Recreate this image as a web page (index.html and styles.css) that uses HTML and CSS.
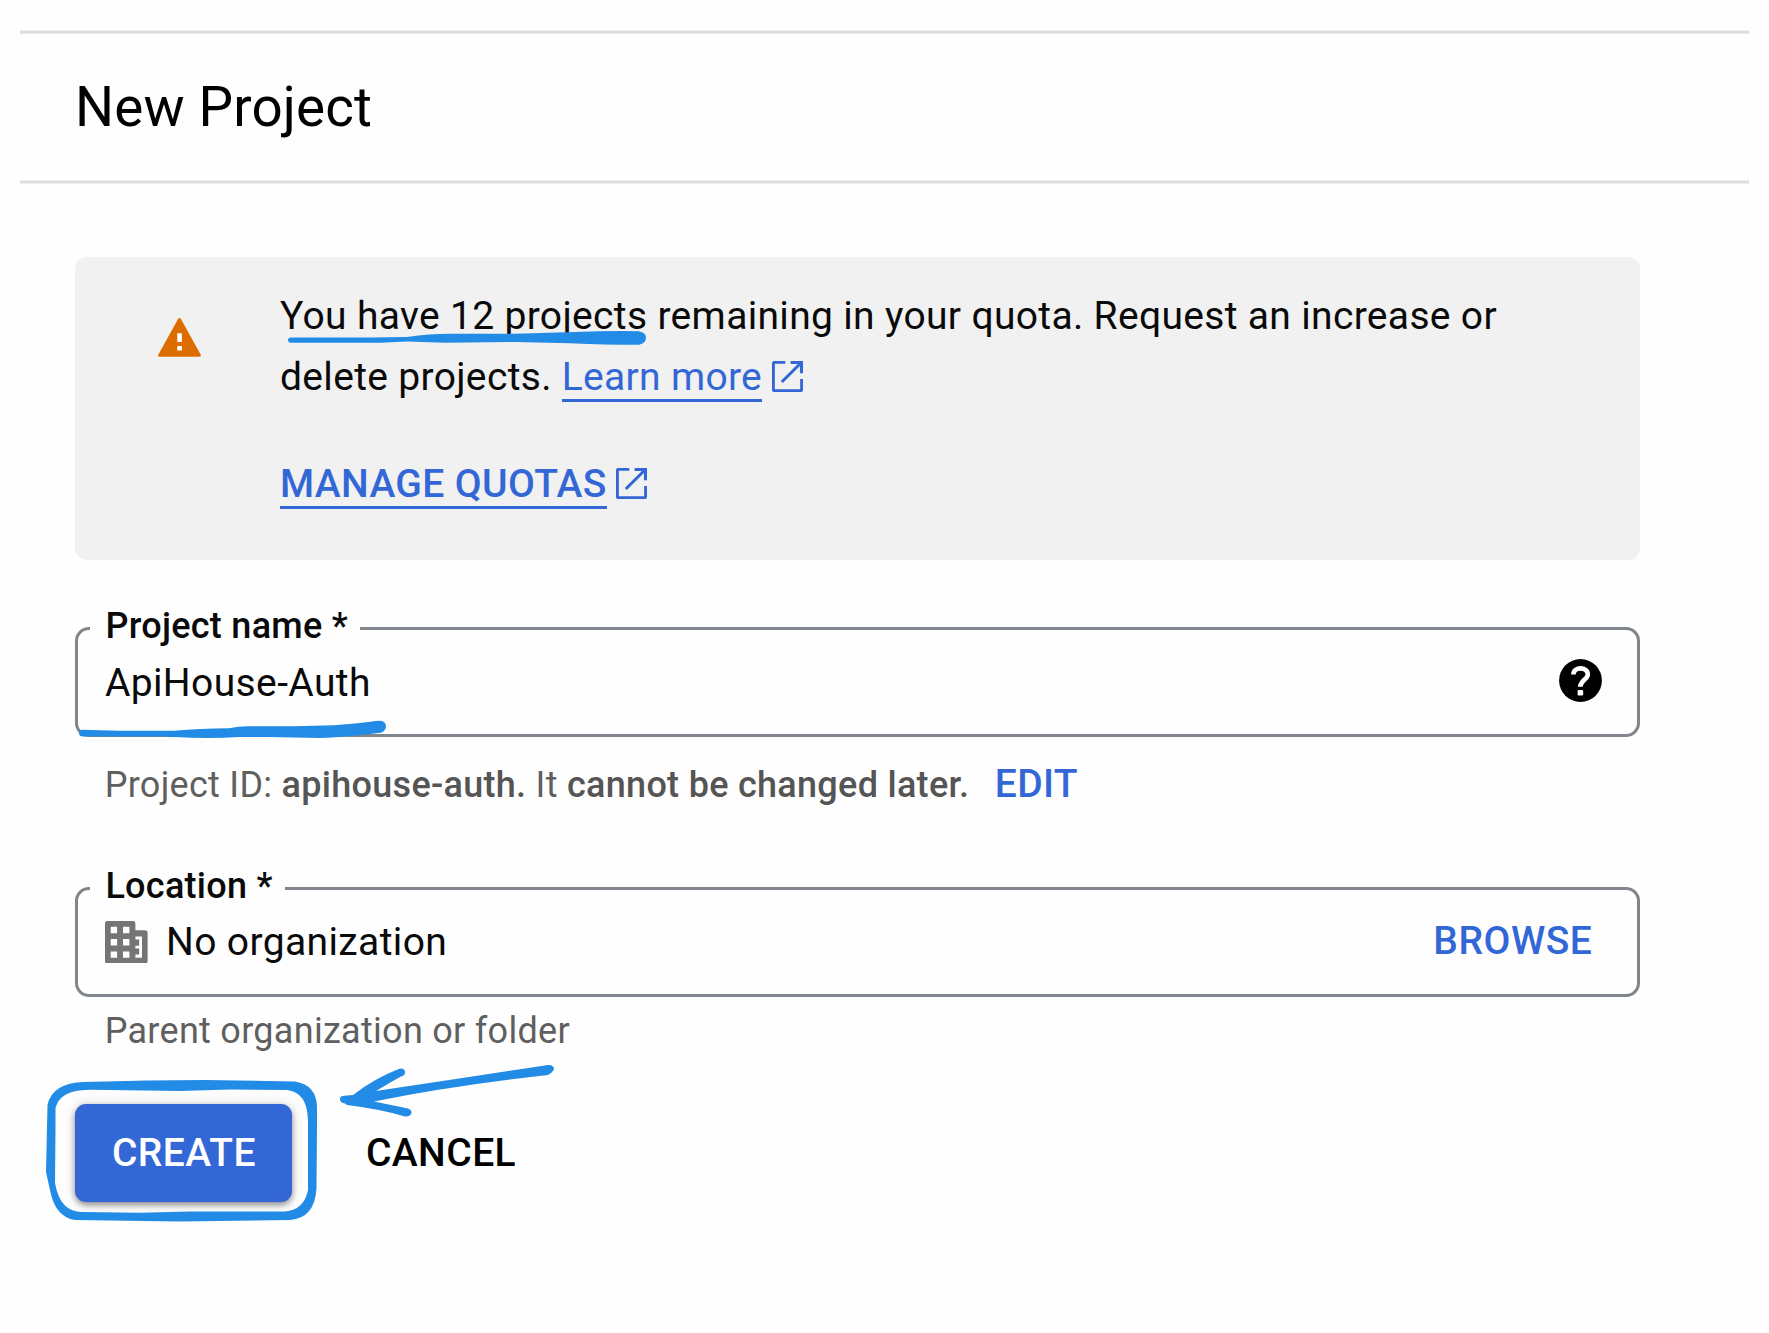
FILE: index.html
```html
<!DOCTYPE html>
<html lang="en">
<head>
<meta charset="utf-8">
<title>New Project</title>
<link rel="stylesheet" href="styles.css">
</head>
<body>
<header class="header"><h1 class="title">New Project</h1></header>
<main class="content">
  <section class="notice">
    <svg class="warn-icon" viewBox="0 0 43 39" width="43" height="39">
      <path fill="#dd6d00" d="M19.9 1.2q1.6-2.2 3.2 0L42.6 36.4q.9 2.3-1.6 2.4H2Q-.5 38.7.4 36.4z"/>
      <path fill="#fff" d="M19.3 15.3h4.6v8.6h-4.6zM19.3 28h4.6v4.6h-4.6z"/>
    </svg>
    <div class="notice-text">
      <p class="notice-line"><span class="marked">You have 12 projects<svg class="mark quota-mark" viewBox="0 0 366 20" width="366" height="20"><path d="M6 4.5H85L122 4Q145 .8 165 .8H230L290-1Q325-2.5 354-1.8Q361-.5 361 4.5Q361 10.5 354 11.7Q325 11.8 285 10.2L230 9L160 9.8L122 8.6L95 9.8H6Q3 9.6 3 7.2T6 4.5z"/></svg></span> remaining in your quota. Request an increase or<br>delete projects. <a class="link learn">Learn more</a><svg class="open-icon" viewBox="0 0 31 31" width="31" height="31"><path d="M13.3 1.3H3Q1.3 1.3 1.3 3V28Q1.3 29.7 3 29.7H28Q29.7 29.7 29.7 28V18M18.6 1.5H29.5V12.2M9.8 21L28.9 2"/></svg></p>
      <p class="notice-action"><a class="link manage">MANAGE QUOTAS</a><svg class="open-icon" viewBox="0 0 31 31" width="31" height="31"><path d="M13.3 1.3H3Q1.3 1.3 1.3 3V28Q1.3 29.7 3 29.7H28Q29.7 29.7 29.7 28V18M18.6 1.5H29.5V12.2M9.8 21L28.9 2"/></svg></p>
    </div>
  </section>

  <div class="field name-field">
    <label class="label">Project name *</label>
    <span class="value">ApiHouse-Auth</span>
    <svg class="help-icon" viewBox="0 0 43 43" width="43" height="43"><circle cx="21.5" cy="21.5" r="21.4"/><path d="M14.4 15.6C14.4 7.2 28.8 7.4 28.8 15.4C28.8 20.5 21.3 21.3 21.3 27.8" fill="none" stroke="#fff" stroke-width="4.6"/><rect x="18.6" y="31" width="5.6" height="5.6" rx="1" fill="#fff"/></svg>
    <svg class="mark name-mark" viewBox="0 0 310 20" width="310" height="20"><path d="M4 9.7L40 10.7H95Q120 8.5 150 8.3Q160 6 172 6.3H215L255 5.2Q280 3.5 299 .7Q307 .3 307 6.5Q306.5 11 302 12.7Q265 17.3 240 18L190 17H160Q130 19 95 17L85 16.5H4Q0 16.5 0 13T4 9.7z"/></svg>
  </div>
  <p class="hint">Project ID: <b>apihouse-auth.</b> It <b>cannot be changed later.</b><a class="text-button edit">EDIT</a></p>

  <div class="field location-field">
    <label class="label">Location *</label>
    <svg class="org-icon" viewBox="0 0 42.6 42.6" width="42.6" height="42.6"><path fill="#757575" fill-rule="evenodd" d="M2.5 0H28Q30.4 0 30.4 2.5V9.3H40Q42.6 9.3 42.6 12V40Q42.6 42.6 40 42.6H2.5Q0 42.6 0 40V2.5Q0 0 2.5 0zM5.7 5.8v6.4h6.4V5.8zM18 5.8v6.4h6.4V5.8zM5.7 18v6.4h6.4V18zM18 18v6.4h6.4V18zM5.7 30.4v6.4h6.4v-6.4zM18 30.4v6.4h6.4v-6.4zM30.4 15.4V18.6H34.2V24.8H30.4V27.6H34.2V33.6H30.4V36.8H37V15.4z"/></svg>
    <span class="value">No organization</span>
    <a class="text-button browse">BROWSE</a>
  </div>
  <p class="hint helper">Parent organization or folder</p>

  <div class="actions">
    <button class="create">CREATE</button>
    <button class="cancel">CANCEL</button>
    <svg class="mark action-mark" viewBox="40 1060 520 170" width="520" height="170">
      <path fill-rule="evenodd" d="M84 1082Q150 1080 205 1080L295 1081.5Q316 1085 317 1106V1128L316.5 1188Q315 1218 290 1220L180 1221.5L75 1220Q55 1217 50 1190L46 1172L47.5 1105Q52 1083 84 1082zM85 1090Q60 1091 55.5 1108V1128L55 1183Q60 1212 82 1212L140 1212.7L190 1211.5H285Q304 1210 308 1190V1120Q307 1092 287 1090L230 1089.5L180 1091L90 1089.7z"/>
      <path d="M343 1096Q352 1095 353 1095Q375 1078 400 1068.5Q405 1068 405 1072.5Q405 1075.5 401 1076.5Q389 1083 376 1091Q450 1080 548 1065Q554 1064.5 554 1069.5Q551 1074 548 1075Q450 1086 374 1101.5L408 1108.5Q412 1110 411.5 1113Q410 1117 405 1116.5Q380 1109 347 1105Q345 1103 343 1103Q340 1102 340 1099T343 1096z"/>
    </svg>
  </div>
</main>
</body>
</html>
```
FILE: styles.css
```css
* { box-sizing: border-box; }
html { background: #fefefe; }
body { margin: 0; min-height: 100vh; padding-top: 30px; font-family: Roboto, "Liberation Sans", sans-serif; font-size: 39px; color: #0a0a0a; }
h1, p { margin: 0; font-weight: 400; }

.header { margin: 0 20px; height: 154px; padding-left: 55px; display: flex; align-items: center; background: linear-gradient(#eee 1px, #ddd 1px 3px, #eaeaea 3px 4px, transparent 4px 150px, #eee 150px 151px, #ddd 151px 153px, #eee 153px); }
.title { font-size: 54.8px; letter-spacing: .15px; line-height: 64px; color: #000; }

.content { width: 1565px; margin: 73px 0 0 75.4px; }
.notice { height: 302.5px; padding-top: 29px; display: flex; align-items: flex-start; background: #f1f1f1; border-radius: 12px; }
.warn-icon { flex: none; margin: 31.5px 79px 0 82.6px; }
.notice-text { line-height: 61px; }
.notice-line { white-space: nowrap; letter-spacing: .33px; }
.notice-action { margin-top: 46px; }
.marked { position: relative; }
.mark { position: absolute; overflow: visible; fill: #228be6; }
.quota-mark { left: 5px; top: 39.5px; }
.link { display: inline-block; height: 49px; line-height: 49px; border-bottom: 3px solid #3367d6; color: #3367d6; }
.learn { letter-spacing: .3px; }
.manage { font-weight: 500; letter-spacing: .37px; }
.open-icon { margin-left: 9.5px; vertical-align: -2px; fill: none; stroke: #3367d6; stroke-width: 3.1px; }

.field { position: relative; height: 110px; border: 3px solid #80868b; border-radius: 14px; display: flex; align-items: center; padding-left: 27px; }
.name-field { margin-top: 67.5px; }
.location-field { margin-top: 83px; }
.label { position: absolute; left: 12px; top: -24px; height: 40px; line-height: 40px; padding: 0 12px 0 15px; background: #fefefe; font-size: 36px; font-weight: 500; letter-spacing: .28px; white-space: nowrap; }
.value { letter-spacing: .38px; }
.name-field .value { margin: 1px 0 0 -.5px; }
.help-icon { margin: -4px 35.5px 0 auto; }
.name-mark { left: .5px; top: 90px; }
.org-icon { margin: 1px 18px 0 0; }
.text-button { font-weight: 500; color: #3367d6; }
.browse { margin: -1px 45px 0 auto; letter-spacing: .5px; }

.hint { margin: 26.5px 0 0 29.3px; height: 40px; line-height: 40px; font-size: 36px; letter-spacing: .29px; color: #5f5f5f; white-space: nowrap; }
.hint b { font-weight: 500; color: #555; letter-spacing: .29px; }
.edit { margin-left: 25.5px; font-size: 39px; letter-spacing: .3px; }
.helper { margin-top: 14.5px; }

.actions { position: relative; margin-top: 52.5px; display: flex; align-items: center; gap: 55px; }
button { border: 0; font: inherit; font-weight: 500; height: 98.5px; padding: 1px 0 0; }
.create { width: 217px; background: #3367d6; color: #fff; border-radius: 11px; letter-spacing: .45px; box-shadow: 0 3px 6px rgba(0,0,0,.4), 0 0 14px rgba(0,0,0,.12); }
.cancel { padding: 1px 18.5px 0; background: none; color: #000; letter-spacing: .45px; }
.action-mark { left: -35.4px; top: -43.5px; }
```
